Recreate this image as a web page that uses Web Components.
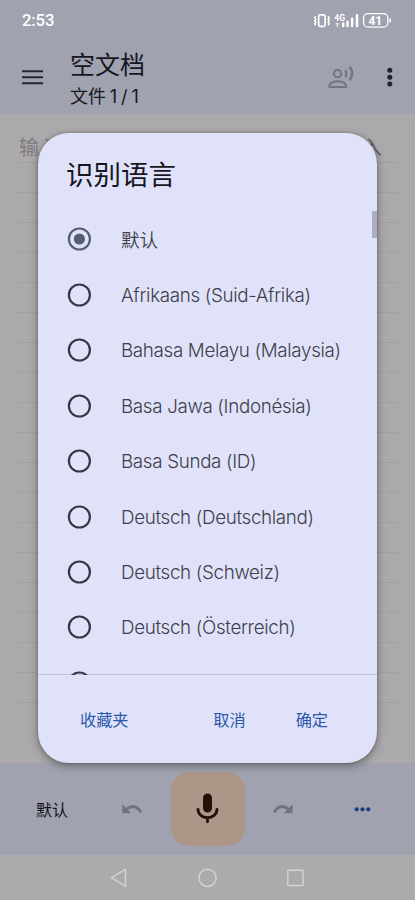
<!DOCTYPE html>
<html lang="zh-CN">
<head>
<meta charset="utf-8">
<title>识别语言</title>
<style>
html,body{margin:0;padding:0}
body{width:415px;height:900px;overflow:hidden;font-family:Inter,"Noto Sans CJK SC",sans-serif}
</style>
</head>
<body>
<note-app></note-app>
<script>
const define=(name,html,init)=>customElements.define(name,class extends HTMLElement{
  constructor(){
    super();
    const t=document.createElement('template');
    t.innerHTML=html;
    this.attachShadow({mode:'open'}).appendChild(t.content.cloneNode(true));
    if(init)init.call(this);
  }
});

define('status-bar',`
<style>
:host{display:flex;justify-content:space-between;height:42px;padding:0 24px 0 22px;color:#fff;box-sizing:border-box}
span{font:500 16.6px/20px Roboto,sans-serif;letter-spacing:-.1px;margin-top:11px}
svg{display:block;margin-top:10px}
</style>
<span>2:53</span>
<svg width="78" height="20" viewBox="313 10 78 20" fill="none" stroke="#fff">
<rect x="318.7" y="14.8" width="6.4" height="11.6" rx="1.6" stroke-width="1.7"/>
<path d="M315.9 16.3l-1.3 1.5 1.3 1.5-1.3 1.5 1.3 1.5-1.3 1.5 1.3 1.5M328 16.3l1.3 1.5-1.3 1.5 1.3 1.5-1.3 1.5 1.3 1.5-1.3 1.5" stroke-width="1.4"/>
<text x="334.3" y="20.6" font-family="Roboto,sans-serif" font-size="8.6" font-weight="700" fill="#fff" stroke="none">4G</text>
<path d="M335.6 23.7h3.4M337.3 23v4" stroke-width="1.6" opacity=".65"/>
<path d="M343.2 23.4v2.6M347.5 21.8v4.2M352.1 18.8v7.2M357 15.3v10.7" stroke-width="2.5" stroke-linecap="round"/>
<rect x="363.6" y="13.7" width="24.2" height="13.4" rx="4.2" stroke-width="1.3"/>
<path d="M390.2 18.5v4" stroke-width="1.6"/>
<text x="375.3" y="24.8" text-anchor="middle" font-family="Roboto,sans-serif" font-size="12" font-weight="700" fill="#fff" stroke="none">41</text>
</svg>`);

define('title-bar',`
<style>
:host{display:flex;height:72px;padding:0 20px 0 22px;box-sizing:border-box}
.menu{margin-top:27px}
svg{display:block}
div{flex:1;margin-left:27px;color:#16171e}
h1{font:400 25px/30px "Noto Sans CJK SC",sans-serif;margin:6px 0 0}
p{font:400 18px/22px Inter,"Noto Sans CJK SC",sans-serif;word-spacing:-1.2px;margin:8px 0 0}
.voice{margin:22px 30px 0 0}
.more{margin-top:24px}
</style>
<svg class="menu" width="21" height="16" viewBox="0 0 21 16" stroke="#27272f" stroke-width="1.9"><path d="M0 2.2h21M0 8.2h21M0 14.2h21"/></svg>
<div><h1><slot name="title"></slot></h1><p><slot name="subtitle"></slot></p></div>
<svg class="voice" width="27" height="26" viewBox="328 64 27 26" fill="none" stroke="#74757e" stroke-width="2.1">
<circle cx="337.6" cy="73.6" r="3.7"/><path d="M329.4 87v-1.6c0-2.5 4-4 8.3-4s8.3 1.5 8.3 4V87z"/>
<path d="M345.2 70.2q2.2 3.4 0 6.8M349.6 66.8q5.2 6.8 0 13.4" stroke-width="2.4"/></svg>
<svg class="more" width="10" height="24" viewBox="0 0 10 24" fill="#222329"><circle cx="4.8" cy="4.3" r="2.5"/><circle cx="4.8" cy="11.2" r="2.5"/><circle cx="4.8" cy="18.1" r="2.5"/></svg>`);

define('ruled-paper',`
<style>
:host{display:block;height:649px;padding:0 18px;box-sizing:border-box;background:#aba9ab}
.first{display:flex;justify-content:space-between;height:48px;padding:18px 15px 0 1px;box-sizing:border-box;font:400 20px/30px "Noto Sans CJK SC",sans-serif;color:#7d7c7f}
.first span:last-child{color:#626164}
.line{height:30px;border-top:1px solid #a09fa2;box-sizing:border-box}
</style>
<div class="first"><span>输入</span><span>入</span></div>`,function(){
  for(let i=0;i<19;i++){const d=document.createElement('div');d.className='line';this.shadowRoot.appendChild(d)}
});

define('action-bar',`
<style>
:host{display:flex;height:92px;background:#a0a2af;box-sizing:border-box;padding-left:36px}
span{font:400 16px/24px "Noto Sans CJK SC",sans-serif;color:#10131f;margin-top:34px;width:86px}
svg{display:block;flex:none}
.mic{width:74px;height:74px;margin:9px 25px 0 29px;border-radius:18px;background:#ad9687;flex:none}
.undo,.redo{margin-top:39px}
.dots{margin:41px 0 0 59px}
</style>
<span>默认</span>
<svg class="undo" width="20" height="14" viewBox="0 0 20 14"><path d="M.5 2.5V11h8L5.8 8C9.3 4.6 15.2 5.2 17.7 10.8l2.1-.8C17 2.7 9.3 1.2 4 6z" fill="#70727c" stroke="#70727c" stroke-width=".3"/></svg>
<div class="mic"><svg width="74" height="74" viewBox="171 772 74 74"><rect x="203" y="793.5" width="9" height="19" rx="4.5" fill="#241007"/><path d="M198 809.3c0 5 4.3 8.3 9.5 8.3s9.5-3.3 9.5-8.3M207.5 817.6v4.2" fill="none" stroke="#241007" stroke-width="2.8" stroke-linecap="round"/></svg></div>
<svg class="redo" width="25" height="14" viewBox="-3 0 25 14"><path d="M19.5 2.5V11h-8L14.2 8C10.7 4.6 4.8 5.2 2.3 10.8L.2 10C3 2.7 10.7 1.2 16 6z" fill="#70727c" stroke="#70727c" stroke-width=".3"/></svg>
<svg class="dots" width="17" height="10" viewBox="0 0 17 10" fill="#1d3d79"><circle cx="2.7" cy="5.3" r="2.1"/><circle cx="8.5" cy="5.3" r="2.1"/><circle cx="14.3" cy="5.3" r="2.1"/></svg>`);

define('system-nav',`
<style>
:host{display:flex;justify-content:center;height:45px;background:#ababab;padding-top:12px;box-sizing:border-box}
svg{display:block}
</style>
<svg width="201" height="22" viewBox="107 867 201 22" fill="none" stroke="#d2d2d2" stroke-width="1.5" stroke-linejoin="round"><path d="M125.5 869.3v17l-14-8.6z"/><circle cx="207.5" cy="877.8" r="8.6"/><rect x="287.8" y="870.3" width="15.2" height="15.2"/></svg>`);

define('language-option',`
<style>
:host{display:flex;align-items:center;height:55.45px;padding-left:29px;color:#3e3f49}
svg{display:block;flex:none}
span{margin:2px 0 0 30px;font:350 18.8px/28px Inter,"Noto Sans CJK SC",sans-serif;white-space:nowrap;letter-spacing:-.33px}
:host([checked]) span{font-size:18.6px;font-family:"Noto Sans CJK SC",sans-serif;font-weight:350;letter-spacing:0;margin-top:0}
.dot{display:none}
circle{stroke:#39363f}
:host([checked]) .dot{display:block}
:host([checked]) circle{stroke:#565d71}
</style>
<svg width="24" height="24" viewBox="0 0 24 24"><circle cx="12.4" cy="12" r="10.5" fill="none" stroke-width="2.2"/><circle class="dot" cx="12.4" cy="12" r="5.6" fill="#565d71" style="stroke:none"/></svg>
<span><slot></slot></span>`);

define('language-dialog',`
<style>
:host{display:flex;flex-direction:column;width:339px;height:630px;border-radius:31px;background:#e0e2fa;box-shadow:0 3px 9px rgba(0,0,0,.35),0 0 3px rgba(0,0,0,.25);overflow:hidden}
h2{font:400 27.5px/40px "Noto Sans CJK SC",sans-serif;color:#16171e;margin:20px 0 0 28px;height:58px}
.list{height:464px;overflow:hidden;display:grid;grid-template-columns:1fr 5px}
.rows{padding-top:.6px}
.bar{width:5px;height:27px;background:#abacc2}
footer{flex:1;margin-top:-1px;border-top:1px solid rgba(70,70,100,.2);display:flex;padding:32px 49px 0 42px;font:400 16.2px/24px "Noto Sans CJK SC",sans-serif;color:#2c57a8}
.grow{flex:1}
.ok{margin-left:50px}
</style>
<h2>识别语言</h2>
<div class="list"><div class="rows"><slot></slot></div><div class="bar"></div></div>
<footer><span class="grow">收藏夹</span><span>取消</span><span class="ok">确定</span></footer>`);

define('note-app',`
<style>
:host{display:flex;flex-direction:column;position:relative;width:415px;height:900px;overflow:hidden}
header{height:114px;background:#a0a2af}
language-dialog{position:absolute;left:38px;top:133px}
</style>
<header><status-bar></status-bar><title-bar><span slot="title">空文档</span><span slot="subtitle">文件 1 / 1</span></title-bar></header>
<ruled-paper></ruled-paper>
<action-bar></action-bar>
<system-nav></system-nav>
<language-dialog>
<language-option checked>默认</language-option>
<language-option>Afrikaans (Suid-Afrika)</language-option>
<language-option>Bahasa Melayu (Malaysia)</language-option>
<language-option>Basa Jawa (Indonésia)</language-option>
<language-option>Basa Sunda (ID)</language-option>
<language-option>Deutsch (Deutschland)</language-option>
<language-option>Deutsch (Schweiz)</language-option>
<language-option>Deutsch (Österreich)</language-option>
<language-option>English (Australia)</language-option>
</language-dialog>`);
</script>
</body>
</html>
